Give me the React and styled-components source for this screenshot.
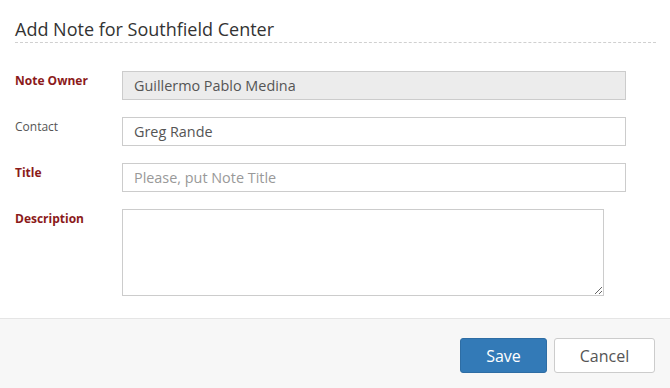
import React from 'react';
import styled, { createGlobalStyle } from 'styled-components';

const GlobalStyle = createGlobalStyle`
  html, body {
    margin: 0;
    padding: 0;
    background: #fff;
    font-family: "Open Sans", "Liberation Sans", sans-serif;
  }
  * {
    box-sizing: border-box;
  }
`;

const Modal = styled.div`
  width: 670px;
  height: 388px;
  display: flex;
  flex-direction: column;
  background: #fff;
`;

const Header = styled.div`
  margin: 0 14px 0 15px;
  padding-top: 17px;
  border-bottom: 1px dashed #d0d0d0;
`;

const Heading = styled.h4`
  margin: 0;
  font-size: 18px;
  font-weight: 400;
  line-height: 24px;
  color: #333;
  padding-bottom: 1px;
`;

const Body = styled.div`
  flex: 1;
  padding: 28px 15px 0;
  display: flex;
  flex-direction: column;
  gap: 17px;
`;

const Row = styled.div`
  display: flex;
  align-items: flex-start;
`;

const Label = styled.label`
  width: 107px;
  flex: none;
  padding-top: 2px;
  font-size: 12px;
  line-height: 16px;
  font-weight: ${p => (p.required ? 700 : 400)};
  color: ${p => (p.required ? '#8b1a1a' : '#555')};
`;

const Input = styled.input`
  width: 504px;
  height: 29px;
  margin: 0;
  padding: 0 11px;
  border: 1px solid #ccc;
  border-radius: 0;
  background: ${p => (p.readOnly ? '#ececec' : '#fff')};
  font-family: inherit;
  font-size: 14.4px;
  color: #555;
  outline: none;

  &::placeholder {
    color: #999;
  }
`;

const TextArea = styled.textarea`
  display: block;
  width: 482px;
  height: 87px;
  margin: 0;
  padding: 6px 11px;
  border: 1px solid #ccc;
  border-radius: 0;
  font-family: inherit;
  font-size: 14.4px;
  color: #555;
  outline: none;
`;

const Footer = styled.div`
  height: 70px;
  flex: none;
  border-top: 1px solid #e5e5e5;
  background: #f7f7f7;
  display: flex;
  justify-content: flex-end;
  align-items: flex-start;
  gap: 7px;
  padding: 19px 15px 0 0;
`;

const Button = styled.button`
  height: 35px;
  width: ${p => p.width}px;
  border-radius: 3px;
  font-family: inherit;
  font-size: 16px;
  cursor: pointer;
  border: 1px solid ${p => (p.primary ? '#2e6da4' : '#ccc')};
  background: ${p => (p.primary ? '#337ab7' : '#fff')};
  color: ${p => (p.primary ? '#fff' : '#555')};
`;

export default function App() {
  return (
    <Modal>
      <GlobalStyle />
      <Header>
        <Heading>Add Note for Southfield Center</Heading>
      </Header>
      <Body>
        <Row>
          <Label required>Note Owner</Label>
          <Input readOnly value="Guillermo Pablo Medina" />
        </Row>
        <Row>
          <Label>Contact</Label>
          <Input defaultValue="Greg Rande" />
        </Row>
        <Row>
          <Label required>Title</Label>
          <Input placeholder="Please, put Note Title" />
        </Row>
        <Row>
          <Label required>Description</Label>
          <TextArea />
        </Row>
      </Body>
      <Footer>
        <Button primary width={87}>Save</Button>
        <Button width={101}>Cancel</Button>
      </Footer>
    </Modal>
  );
}
